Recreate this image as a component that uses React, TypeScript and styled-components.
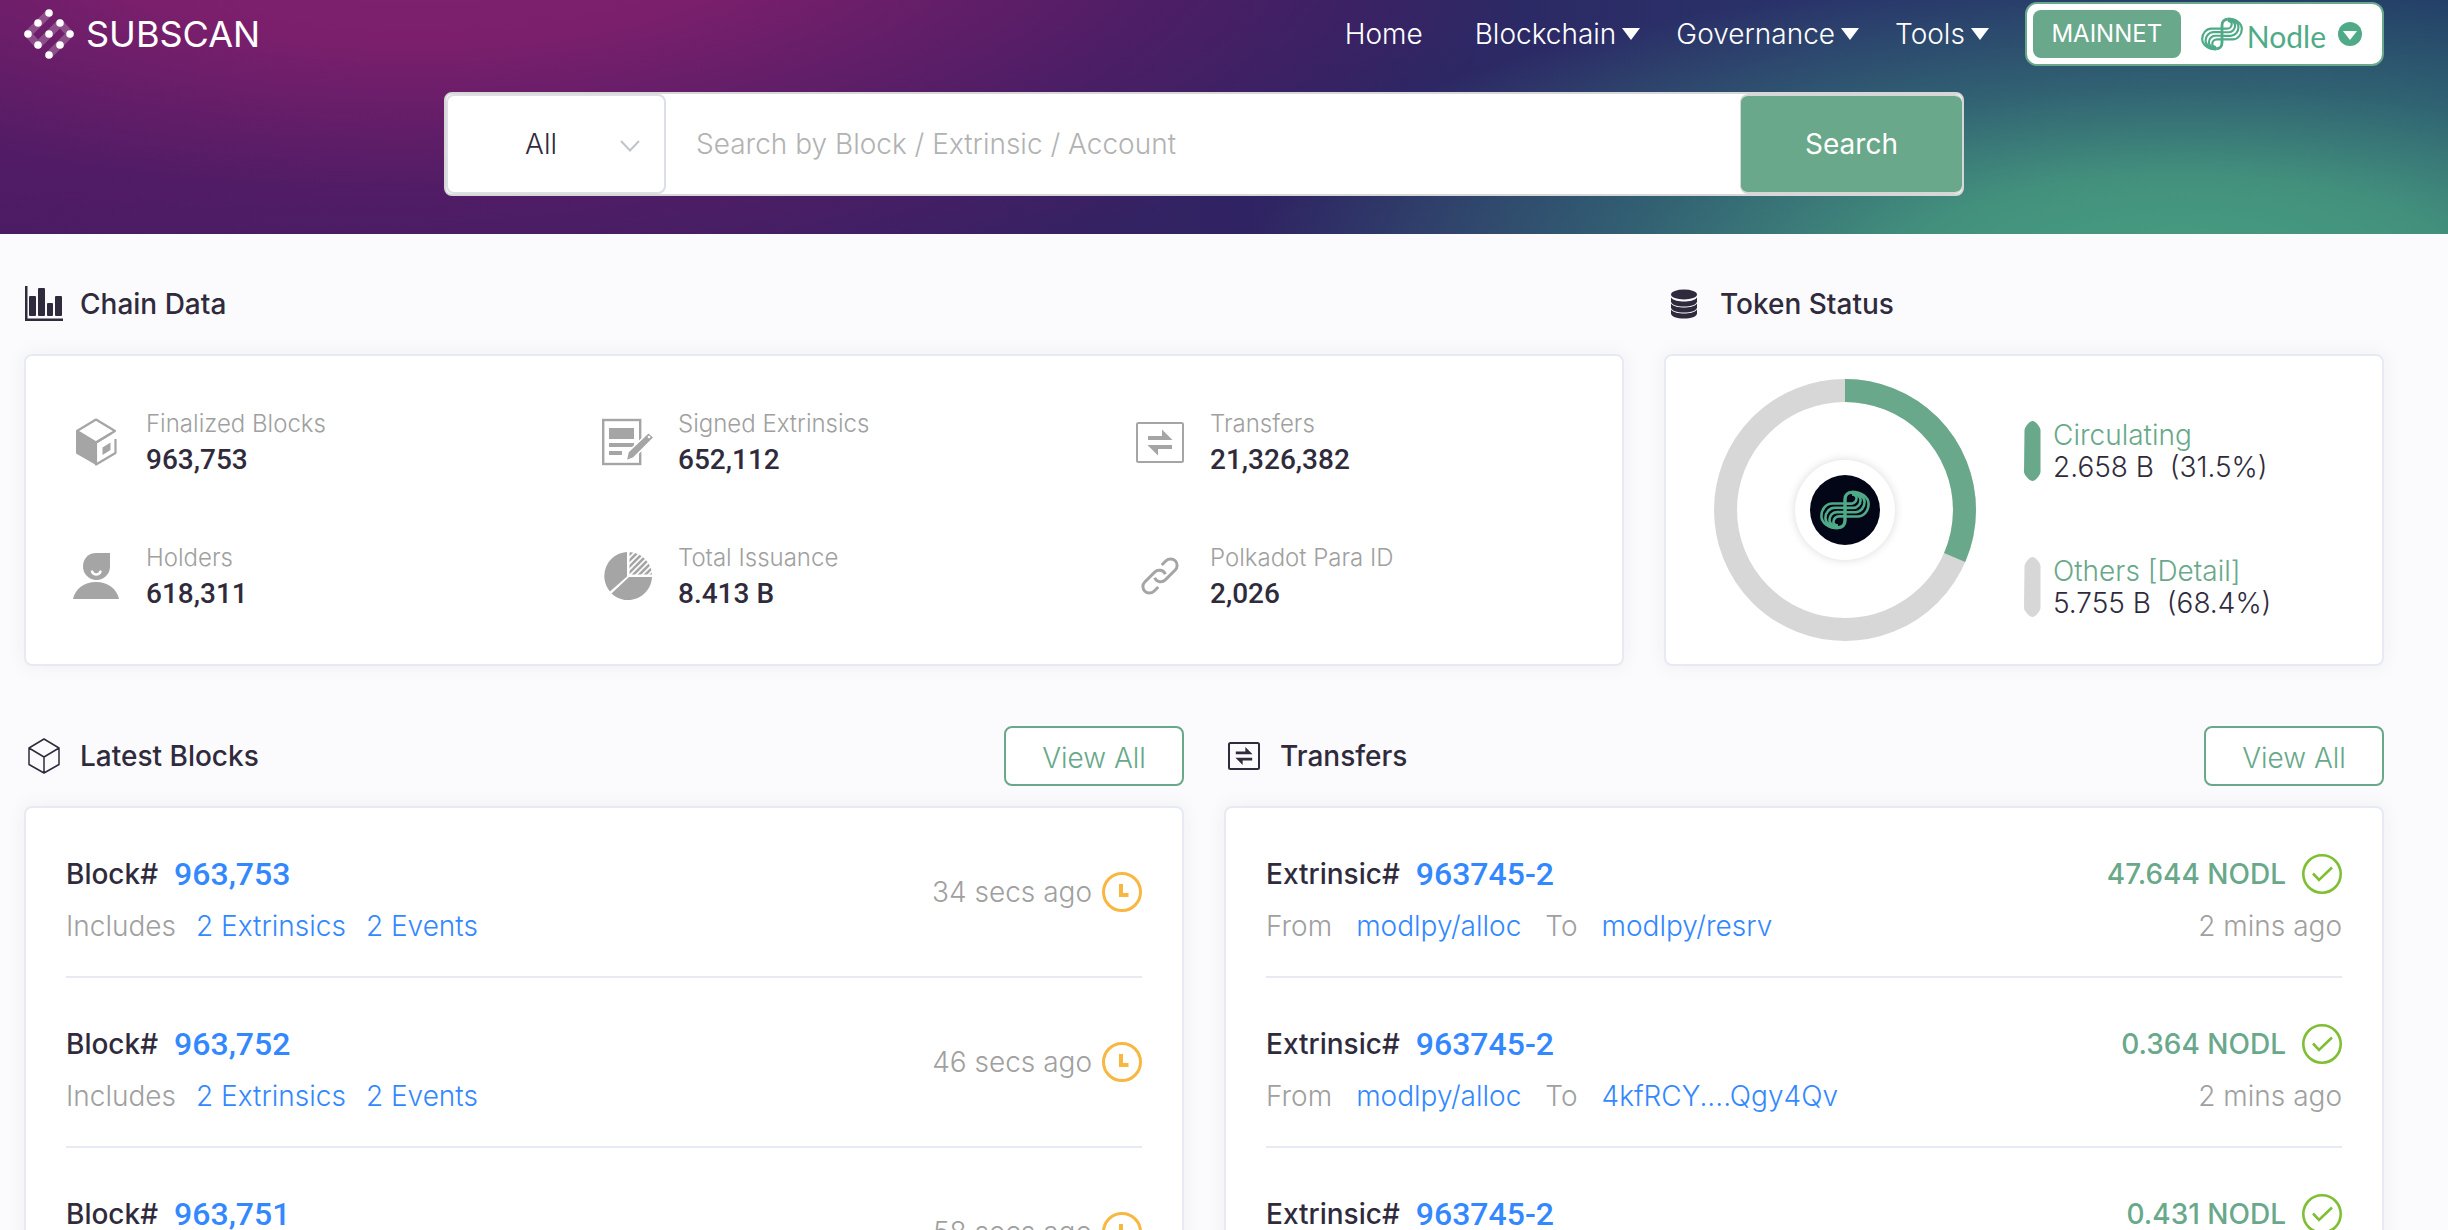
import React from "react";
import styled, { createGlobalStyle } from "styled-components";

const color = {
  ink: "#302b3c",
  muted: "#a0a0a0",
  icon: "#a5a5a5",
  green: "#69a88a",
  nodle: "#4fab87",
  blue: "#3388ff",
  line: "#e7eaf3",
  ring: "#d7d7d7",
};

const numerals = `Roboto, "Liberation Sans", sans-serif`;

const GlobalStyle = createGlobalStyle`
  *, *::before, *::after { box-sizing: border-box; }
  body {
    margin: 0;
    background: #fbfbfd;
    color: ${color.ink};
    font-family: Inter, "Liberation Sans", sans-serif;
    font-size: 28px;
    font-weight: 300;
    line-height: 32px;
  }
  button, input, select { font: inherit; color: inherit; }
  button { cursor: pointer; padding: 0; border: 0; background: none; }
  a { color: inherit; text-decoration: none; }
  h2, p, ul, dl, dd { margin: 0; padding: 0; }
  ul { list-style: none; }
  svg { display: block; flex: none; }
`;

/* ---------- header ---------- */

const Header = styled.header`
  height: 234px;
  padding: 0 64px 0 24px;
  color: #fff;
  background:
    radial-gradient(ellipse 38% 122% at 89% 110%, #479d80 0%, #43917d 28%, rgba(52, 112, 118, 0.75) 60%, rgba(42, 60, 106, 0) 100%),
    radial-gradient(ellipse 46% 160% at 17% -30%, #80206d 0%, #7b1f6c 30%, rgba(86, 28, 102, 0.7) 70%, rgba(48, 35, 99, 0) 100%),
    linear-gradient(90deg, #471b63 0%, #3f1f64 30%, #2e2463 54%, #29336a 75%, #223a66 100%);
`;

const TopBar = styled.div`
  display: flex;
  align-items: center;
  justify-content: space-between;
  height: 68px;
`;

const Brand = styled.a`
  display: flex;
  align-items: center;
  gap: 12px;
  font-size: 36px;
  font-weight: 400;
`;

const Nav = styled.nav`
  display: flex;
  align-items: center;
  gap: 36px;
`;

const HomeLink = styled.a`
  padding-right: 16px;
`;

const MenuButton = styled.button`
  display: flex;
  align-items: center;
  gap: 6px;
`;

const Network = styled.div`
  display: flex;
  align-items: center;
  height: 64px;
  padding: 0 20px 0 6px;
  gap: 20px;
  border: 2px solid ${color.green};
  border-radius: 12px;
  background: #fff;
`;

const MainnetButton = styled.button`
  width: 148px;
  height: 48px;
  border-radius: 8px;
  background: ${color.green};
  font-size: 24px;
  font-weight: 400;
`;

const NetworkButton = styled.button`
  display: flex;
  align-items: center;
  gap: 4px;
  color: ${color.nodle};
  font-family: Lato, sans-serif;
  font-size: 30px;
  font-weight: 400;

  svg:last-child { margin-left: 8px; }
`;

const NetworkName = styled.span`
  padding-top: 4px;
`;

const SearchForm = styled.form`
  display: flex;
  width: 100%;
  max-width: 1520px;
  height: 104px;
  margin: 24px auto 0;
  border: 2px solid ${color.ring};
  border-radius: 8px;
  background: #fff;
  color: ${color.ink};
  overflow: hidden;
`;

const SelectBox = styled.div`
  position: relative;
  width: 220px;

  svg {
    position: absolute;
    right: 26px;
    top: 46px;
    pointer-events: none;
  }
`;

const Scope = styled.select`
  width: 100%;
  height: 100%;
  padding: 0 30px 0 0;
  border: 2px solid #dcdfe4;
  border-radius: 8px;
  background: #fff;
  appearance: none;
  text-align: center;
  text-align-last: center;
`;

const Query = styled.input`
  flex: 1;
  min-width: 0;
  padding: 0 30px;
  border: 0;
  outline: 0;
  background: transparent;

  &::placeholder { color: #b2b2b2; opacity: 1; }
`;

const SearchButton = styled.button`
  width: 222px;
  border: 2px solid ${color.ring};
  border-left-width: 1px;
  border-right-width: 0;
  border-radius: 8px;
  background: ${color.green};
  color: #fff;
  font-weight: 400;
`;

/* ---------- page sections ---------- */

const Main = styled.main`
  display: flex;
  flex-direction: column;
  gap: 60px;
  padding: 40px 64px 60px 24px;
`;

const Columns = styled.div<{ $template: string }>`
  display: grid;
  grid-template-columns: ${(p) => p.$template};
  gap: 40px;
`;

const Section = styled.section`
  display: flex;
  flex-direction: column;
  gap: 20px;
  min-width: 0;
`;

const SectionHead = styled.div`
  display: flex;
  align-items: center;
  justify-content: space-between;
  height: 60px;
`;

const Title = styled.h2`
  display: grid;
  grid-template-columns: 40px auto;
  align-items: center;
  gap: 16px;
  font-size: 28px;
  font-weight: 500;

  svg { justify-self: center; }
`;

const ViewAll = styled.a`
  display: flex;
  align-items: center;
  justify-content: center;
  width: 180px;
  height: 60px;
  padding-top: 4px;
  border: 2px solid ${color.green};
  border-radius: 8px;
  background: #fff;
  color: ${color.green};
`;

const Card = styled.div`
  flex: 1;
  border: 2px solid ${color.line};
  border-radius: 8px;
  background: #fff;
  box-shadow: 0 0 20px rgba(48, 43, 60, 0.06);
`;

const StatsGrid = styled.dl`
  display: grid;
  grid-template-columns: repeat(3, 1fr);
  row-gap: 62px;
  padding: 50px 0 52px;
`;

const Stat = styled.div`
  display: grid;
  grid-template-columns: 52px 1fr;
  align-items: center;
  column-gap: 24px;
  padding-left: 44px;

  svg { grid-row: span 2; justify-self: center; }
`;

const StatLabel = styled.dt`
  color: ${color.muted};
  font-size: 24px;
  line-height: 36px;
`;

const StatValue = styled.dd`
  font-family: ${numerals};
  font-size: 28px;
  font-weight: 500;
  line-height: 36px;
`;

/* ---------- token status ---------- */

const TokenBody = styled.div`
  display: flex;
  align-items: center;
  height: 100%;
  gap: 48px;
  padding-left: 48px;
`;

const Donut = styled.div`
  display: grid;
  place-items: center;

  > * { grid-area: 1 / 1; }
`;

const TokenBadge = styled.div`
  display: grid;
  place-items: center;
  width: 100px;
  height: 100px;
  border-radius: 50%;
  background: #fff;
  box-shadow: 0 0 10px rgba(0, 0, 0, 0.15);
`;

const TokenDisc = styled.div`
  display: grid;
  place-items: center;
  width: 70px;
  height: 70px;
  border-radius: 50%;
  background: #020617;
  color: ${color.nodle};
`;

const Legend = styled.ul`
  display: flex;
  flex-direction: column;
  gap: 72px;
  padding-top: 18px;
`;

const LegendRow = styled.li`
  display: flex;
  align-items: center;
  gap: 12px;
`;

const LegendName = styled.p`
  color: ${color.green};
`;

const LegendValue = styled.p`
  white-space: pre;
`;

/* ---------- lists ---------- */

const List = styled.ul`
  padding: 0 40px;
`;

const Row = styled.li`
  display: flex;
  align-items: center;
  justify-content: space-between;
  height: 170px;
  border-bottom: 2px solid ${color.line};
`;

const Stack = styled.div<{ $end?: boolean }>`
  display: flex;
  flex-direction: column;
  align-items: ${(p) => (p.$end ? "flex-end" : "flex-start")};
  gap: 12px;
  padding-top: 16px;
`;

const Line = styled.div<{ $gap: number }>`
  display: flex;
  align-items: center;
  gap: ${(p) => p.$gap}px;
  height: 40px;
`;

const Kind = styled.span`
  font-weight: 500;
`;

const IdLink = styled.a`
  color: ${color.blue};
  font-family: ${numerals};
  font-size: 32px;
  font-weight: 500;
`;

const Muted = styled.span`
  color: ${color.muted};
`;

const BlueLink = styled.a`
  color: ${color.blue};
`;

const Amount = styled.span`
  color: ${color.green};
  font-weight: 500;
`;

/* ---------- drawings ---------- */

const Caret = () => (
  <svg width="18" height="12" viewBox="0 0 18 12" aria-hidden="true">
    <path d="M0 0h18L9 12z" fill="currentColor" />
  </svg>
);

const BrandMark = () => {
  const dots = [
    [25, 4], [14, 14], [36, 14], [4, 25], [25, 25], [46, 25], [14, 36], [36, 36], [25, 46],
  ];
  return (
    <svg width="50" height="50" viewBox="0 0 50 50" aria-hidden="true">
      <g fill="none" stroke="#fff" strokeOpacity="0.22" strokeWidth="7.5">
        <path d="M25 4L4 25l10 11L36 14l10 11-21 21" strokeLinejoin="round" />
      </g>
      {dots.map(([x, y]) => (
        <circle key={`${x}-${y}`} cx={x} cy={y} r="3.8" fill="#fff" />
      ))}
    </svg>
  );
};

const strand = (i: number) => {
  const y = 13.6 + i * 4.3;
  const mid = 31 + i * 2.2;
  const right = 36.6 + i * 4;
  const side = 8 + i * 2;
  const top = 4.4 - i * 0.9;
  return `M25 ${y}H${mid}A${right - mid} ${y - side} 0 0 0 ${right} ${side}A${right - 32} ${side - top} 0 0 0 32 ${top}`;
};

const NodleMark = ({ width, height }: { width: number; height: number }) => {
  const half = (
    <>
      {[0, 1, 2, 3].map((i) => (
        <path key={i} d={strand(i)} />
      ))}
      <path d="M25 20V9.5C25 5 28 2.4 32 2.4" strokeWidth="3.4" />
    </>
  );
  return (
    <svg width={width} height={height} viewBox="0 0 50 40" fill="none" stroke="currentColor" strokeWidth="2.6" aria-hidden="true">
      <g>{half}</g>
      <g transform="rotate(180 25 20)">{half}</g>
    </svg>
  );
};

const NetworkArrow = () => (
  <svg width="24" height="24" viewBox="0 0 24 24" aria-hidden="true">
    <circle cx="12" cy="12" r="12" fill="currentColor" />
    <path d="M5 9h14l-7 9z" fill="#fff" />
  </svg>
);

const Chevron = () => (
  <svg width="20" height="12" viewBox="0 0 20 12" aria-hidden="true">
    <path d="M1 1l9 9.5l9-9.5" fill="none" stroke="#c0c4cc" strokeWidth="2" />
  </svg>
);

const BarsIcon = () => (
  <svg width="40" height="36" viewBox="0 0 40 36" fill={color.ink} aria-hidden="true">
    <path d="M1 0h2.5v32.5H39V35H1z" />
    <rect x="5" y="10" width="7" height="20" rx="1" />
    <rect x="14" y="2" width="7" height="28" rx="1" />
    <rect x="23" y="17" width="6" height="13" rx="1" />
    <rect x="31" y="10" width="7" height="20" rx="1" />
  </svg>
);

const CoinsIcon = () => (
  <svg width="26" height="30" viewBox="0 0 26 30" fill={color.ink} aria-hidden="true">
    <ellipse cx="13" cy="5.5" rx="13" ry="5" />
    {[0, 6, 12].map((dy) => (
      <path key={dy} transform={`translate(0 ${dy})`} d="M0 8.5c2 3 8 4 13 4s11-1 13-4v4c0 3-6 5-13 5s-13-2-13-5z" />
    ))}
  </svg>
);

const BlockIcon = () => (
  <svg width="42" height="48" viewBox="0 0 42 48" aria-hidden="true">
    <g fill="none" stroke={color.icon} strokeWidth="2.2" strokeLinejoin="round">
      <path d="M21 1.5L40 13 21 24.5 2 13z" />
      <path d="M40.5 21V35L21 46.5V24.5L36 15.5" />
    </g>
    <path d="M1 13l20 11.5V47L1 35.5z" fill={color.icon} />
    <path d="M27.5 29.5l8-5v7.5l-8 5z" fill={color.icon} />
  </svg>
);

const ExtrinsicIcon = () => (
  <svg width="52" height="48" viewBox="0 0 52 48" aria-hidden="true">
    <rect x="1.2" y="2" width="37" height="44" fill="none" stroke={color.icon} strokeWidth="2.4" />
    <g fill={color.icon}>
      <rect x="7" y="10" width="25" height="11" />
      <rect x="7" y="25" width="25" height="4" />
      <rect x="7" y="33" width="13" height="4" />
    </g>
    <path d="M24 43l2-9L46.5 14.5l5.5 5L31.5 40z" fill={color.icon} stroke="#fff" strokeWidth="1.6" />
    <circle cx="47" cy="19" r="1.3" fill="#fff" />
  </svg>
);

const TransferIcon = ({ width, height, tone, stroke }: { width: number; height: number; tone: string; stroke: number }) => (
  <svg width={width} height={height} viewBox={`0 0 ${width} ${height}`} aria-hidden="true">
    <rect x={stroke / 2} y={stroke / 2} width={width - stroke} height={height - stroke} rx="1.5" fill="none" stroke={tone} strokeWidth={stroke} />
    <g transform={`translate(${width / 2} ${height / 2}) scale(${height / 41})`} fill={tone}>
      <path d="M-12-6.5H2V-13L12.5-2.5H-12z" />
      <path d="M12 6.5H-2V13L-12.5 2.5H12z" />
    </g>
  </svg>
);

const HolderIcon = () => (
  <svg width="46" height="46" viewBox="0 0 46 46" aria-hidden="true">
    <path d="M23 0h14v13.5a13.5 13.5 0 0 1-27 0C10 6 15 0 23 0z" fill={color.icon} />
    <path d="M19 18.5c1.500 4 7 4 8.500 0" fill="none" stroke="#fff" strokeWidth="2.4" strokeLinecap="round" />
    <path d="M0 46c2-10 11-17 23-17s21 7 23 17z" fill={color.icon} />
  </svg>
);

const IssuanceIcon = () => (
  <svg width="48" height="48" viewBox="0 0 48 48" aria-hidden="true">
    <defs>
      <clipPath id="slice">
        <path d="M25.5 0A24 24 0 0 1 48 22.5H25.5z" />
      </clipPath>
    </defs>
    <path d="M23 0v24.5L6 39.5A24 24 0 0 1 23 0z" fill={color.icon} />
    <path d="M48 25A24 24 0 0 1 7.5 41.5L25 25z" fill={color.icon} />
    <g clipPath="url(#slice)" stroke={color.icon} strokeWidth="2.6">
      {[0, 1, 2, 3, 4, 5, 6, 7].map((i) => (
        <path key={i} d={`M24 ${4 + i * 6}L54 ${-26 + i * 6}`} />
      ))}
    </g>
  </svg>
);

const ChainLinkIcon = () => {
  const link = "M-9 6.5H-15a6.5 6.5 0 0 1 0-13H-1a6.5 6.5 0 0 1 6 9";
  return (
    <svg width="38" height="38" viewBox="-19 -19 38 38" fill="none" stroke={color.icon} strokeWidth="3" aria-hidden="true">
      <path transform="rotate(-45)" d={link} />
      <path transform="rotate(135)" d={link} />
    </svg>
  );
};

const CubeIcon = () => (
  <svg width="32" height="36" viewBox="0 0 32 36" fill="none" stroke={color.ink} strokeWidth="1.5" strokeLinejoin="round" aria-hidden="true">
    <path d="M16 1L31 10v16.5L16 35 1 26.5V10zM1 10l15 9 15-9M16 19v16" />
  </svg>
);

const ClockIcon = () => (
  <svg width="40" height="40" viewBox="0 0 40 40" fill="none" stroke="#f7b740" aria-hidden="true">
    <circle cx="20" cy="20" r="18.5" strokeWidth="3" />
    <path d="M19 12v11h7.5" strokeWidth="4" />
  </svg>
);

const CheckIcon = () => (
  <svg width="40" height="40" viewBox="0 0 40 40" fill="none" stroke="#80bf34" aria-hidden="true">
    <circle cx="20" cy="20" r="18.7" strokeWidth="2.6" />
    <path d="M11 19.5l6 6.5 13-12.5" strokeWidth="2.6" />
  </svg>
);

const LegendMark = ({ tone }: { tone: string }) => (
  <svg width="17" height="60" viewBox="0 0 17 60" fill={tone} aria-hidden="true">
    <path d="M8.5 0C11 0 16 5 16.5 9v42c-.5 4-5.5 9-8 9S.5 55 0 51L.5 9C1 5 6 0 8.500 0z" />
  </svg>
);

const Ring = ({ share }: { share: number }) => {
  const radius = 119.5;
  const length = 2 * Math.PI * radius;
  return (
    <svg width="262" height="262" viewBox="0 0 262 262" fill="none" strokeWidth="23" role="img" aria-label="Token distribution">
      <circle cx="131" cy="131" r={radius} stroke={color.ring} />
      <circle
        cx="131"
        cy="131"
        r={radius}
        stroke={color.green}
        strokeDasharray={`${length * share} ${length}`}
        transform="rotate(-90 131 131)"
      />
    </svg>
  );
};

/* ---------- data ---------- */

const stats = [
  { label: "Finalized Blocks", value: "963,753", icon: <BlockIcon /> },
  { label: "Signed Extrinsics", value: "652,112", icon: <ExtrinsicIcon /> },
  { label: "Transfers", value: "21,326,382", icon: <TransferIcon width={48} height={41} tone={color.icon} stroke={2} /> },
  { label: "Holders", value: "618,311", icon: <HolderIcon /> },
  { label: "Total Issuance", value: "8.413 B", icon: <IssuanceIcon /> },
  { label: "Polkadot Para ID", value: "2,026", icon: <ChainLinkIcon /> },
];

const blocks = [
  { id: "963,753", age: "34 secs ago" },
  { id: "963,752", age: "46 secs ago" },
  { id: "963,751", age: "58 secs ago" },
];

const transfers = [
  { id: "963745-2", to: "modlpy/resrv", amount: "47.644 NODL" },
  { id: "963745-2", to: "4kfRCY....Qgy4Qv", amount: "0.364 NODL" },
  { id: "963745-2", to: "modlpy/resrv", amount: "0.431 NODL" },
];

export default function App() {
  return (
    <>
      <GlobalStyle />
      <Header>
        <TopBar>
          <Brand href="#">
            <BrandMark />
            SUBSCAN
          </Brand>
          <Nav>
            <HomeLink href="#">Home</HomeLink>
            {["Blockchain", "Governance", "Tools"].map((name) => (
              <MenuButton key={name} type="button">
                {name}
                <Caret />
              </MenuButton>
            ))}
            <Network>
              <MainnetButton type="button">MAINNET</MainnetButton>
              <NetworkButton type="button">
                <NodleMark width={42} height={34} />
                <NetworkName>Nodle</NetworkName>
                <NetworkArrow />
              </NetworkButton>
            </Network>
          </Nav>
        </TopBar>
        <SearchForm onSubmit={(e) => e.preventDefault()}>
          <SelectBox>
            <Scope aria-label="Search scope" defaultValue="All">
              <option>All</option>
              <option>Block</option>
              <option>Extrinsic</option>
              <option>Account</option>
            </Scope>
            <Chevron />
          </SelectBox>
          <Query type="text" aria-label="Search" placeholder="Search by Block / Extrinsic / Account" />
          <SearchButton type="submit">Search</SearchButton>
        </SearchForm>
      </Header>

      <Main>
        <Columns $template="20fr 9fr">
          <Section>
            <SectionHead>
              <Title>
                <BarsIcon />
                Chain Data
              </Title>
            </SectionHead>
            <Card>
              <StatsGrid>
                {stats.map((s) => (
                  <Stat key={s.label}>
                    {s.icon}
                    <StatLabel>{s.label}</StatLabel>
                    <StatValue>{s.value}</StatValue>
                  </Stat>
                ))}
              </StatsGrid>
            </Card>
          </Section>

          <Section>
            <SectionHead>
              <Title>
                <CoinsIcon />
                Token Status
              </Title>
            </SectionHead>
            <Card>
              <TokenBody>
                <Donut>
                  <Ring share={0.315} />
                  <TokenBadge>
                    <TokenDisc>
                      <NodleMark width={50} height={40} />
                    </TokenDisc>
                  </TokenBadge>
                </Donut>
                <Legend>
                  <LegendRow>
                    <LegendMark tone={color.green} />
                    <div>
                      <LegendName>Circulating</LegendName>
                      <LegendValue>2.658 B  (31.5%)</LegendValue>
                    </div>
                  </LegendRow>
                  <LegendRow>
                    <LegendMark tone={color.ring} />
                    <div>
                      <LegendName>
                        Others <a href="#">[Detail]</a>
                      </LegendName>
                      <LegendValue>5.755 B  (68.4%)</LegendValue>
                    </div>
                  </LegendRow>
                </Legend>
              </TokenBody>
            </Card>
          </Section>
        </Columns>

        <Columns $template="1fr 1fr">
          <Section>
            <SectionHead>
              <Title>
                <CubeIcon />
                Latest Blocks
              </Title>
              <ViewAll href="#">View All</ViewAll>
            </SectionHead>
            <Card>
              <List>
                {blocks.map((b) => (
                  <Row key={b.id}>
                    <Stack>
                      <Line $gap={16}>
                        <Kind>Block#</Kind>
                        <IdLink href="#">{b.id}</IdLink>
                      </Line>
                      <Line $gap={20}>
                        <Muted>Includes</Muted>
                        <BlueLink href="#">2 Extrinsics</BlueLink>
                        <BlueLink href="#">2 Events</BlueLink>
                      </Line>
                    </Stack>
                    <Line $gap={10}>
                      <Muted>{b.age}</Muted>
                      <ClockIcon />
                    </Line>
                  </Row>
                ))}
              </List>
            </Card>
          </Section>

          <Section>
            <SectionHead>
              <Title>
                <TransferIcon width={32} height={28} tone={color.ink} stroke={2} />
                Transfers
              </Title>
              <ViewAll href="#">View All</ViewAll>
            </SectionHead>
            <Card>
              <List>
                {transfers.map((t, i) => (
                  <Row key={i}>
                    <Stack>
                      <Line $gap={16}>
                        <Kind>Extrinsic#</Kind>
                        <IdLink href="#">{t.id}</IdLink>
                      </Line>
                      <Line $gap={24}>
                        <Muted>From</Muted>
                        <BlueLink href="#">modlpy/alloc</BlueLink>
                        <Muted>To</Muted>
                        <BlueLink href="#">{t.to}</BlueLink>
                      </Line>
                    </Stack>
                    <Stack $end>
                      <Line $gap={16}>
                        <Amount>{t.amount}</Amount>
                        <CheckIcon />
                      </Line>
                      <Line $gap={0}>
                        <Muted>2 mins ago</Muted>
                      </Line>
                    </Stack>
                  </Row>
                ))}
              </List>
            </Card>
          </Section>
        </Columns>
      </Main>
    </>
  );
}
